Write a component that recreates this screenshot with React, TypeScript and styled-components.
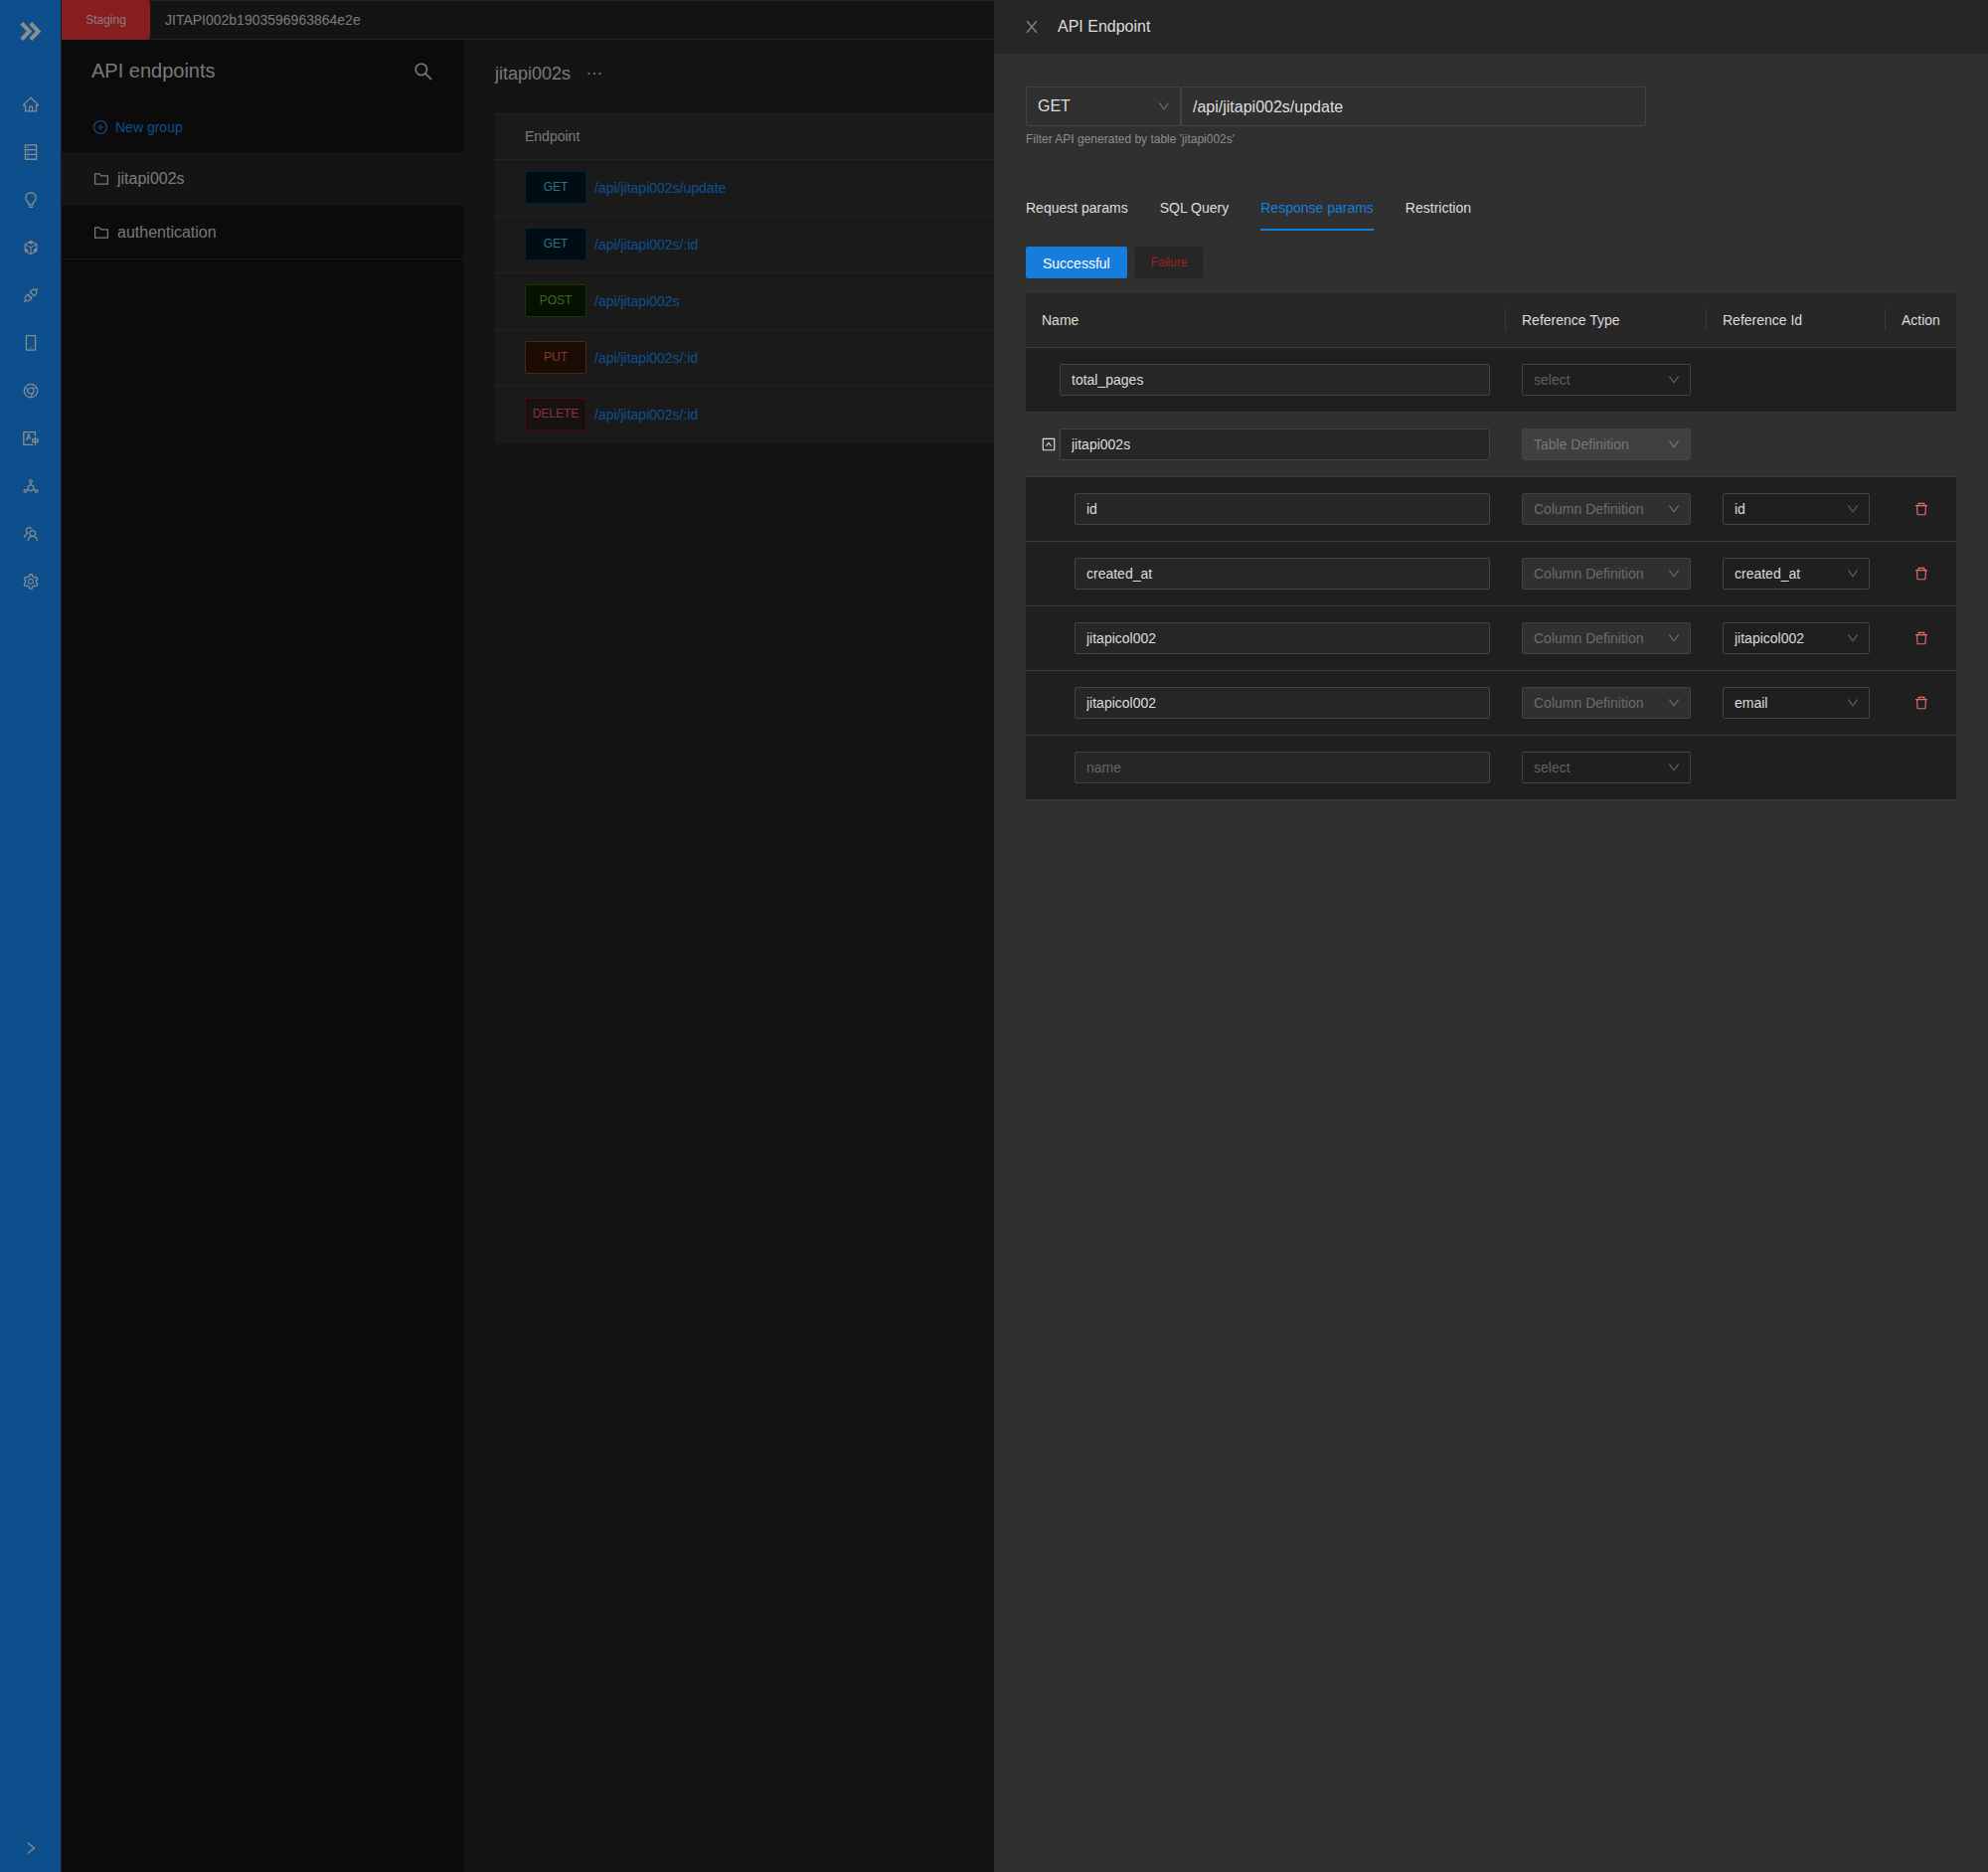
import React, { useState } from 'react';
import styled, { createGlobalStyle, css } from 'styled-components';
import {
  AiOutlineHome,
  AiOutlineDatabase,
  AiOutlineBulb,
  AiOutlineCodeSandbox,
  AiOutlineApi,
  AiOutlineMobile,
  AiOutlineChrome,
  AiOutlineTranslation,
  AiOutlineDeploymentUnit,
  AiOutlineTeam,
  AiOutlineSetting,
  AiOutlineRight,
  AiOutlineDown,
  AiOutlineUpSquare,
  AiOutlineDelete,
  AiOutlineEllipsis,
  AiOutlineFolder,
  AiOutlinePlusCircle,
  AiOutlineSearch,
} from 'react-icons/ai';

const text = 'rgba(255, 255, 255, 0.85)';
const muted = 'rgba(255, 255, 255, 0.45)';
const faint = 'rgba(255, 255, 255, 0.3)';
const line = '#434343';
const blue = '#177ddc';

const GlobalStyle = createGlobalStyle`
  *, *::before, *::after { box-sizing: border-box; }
  body {
    margin: 0;
    background: #262626;
    color: ${text};
    font-family: "Liberation Sans", Arial, sans-serif;
    font-size: 14px;
    line-height: 22px;
  }
  button, input, select { font: inherit; color: inherit; margin: 0; }
  h1, h2, p { margin: 0; font-weight: 400; }
  a { text-decoration: none; color: inherit; }
  svg { display: block; flex: none; }
`;

const bareButton = css`
  display: inline-flex;
  align-items: center;
  padding: 0;
  border: 0;
  background: none;
  cursor: pointer;
`;

const Page = styled.div`
  display: flex;
  min-height: 100vh;
`;

const Rail = styled.nav`
  display: flex;
  flex-direction: column;
  align-items: center;
  flex: none;
  width: 62px;
  background: #1890ff;
  border-right: 1px solid #303030;
  color: #fff;
`;

const Logo = styled.a`
  display: flex;
  padding: 22px 0 40px;
`;

const RailLink = styled.a`
  display: flex;
  align-items: center;
  height: 48px;
`;

const RailToggle = styled.button`
  ${bareButton}
  height: 48px;
  margin-top: auto;
`;

const Workspace = styled.div`
  display: flex;
  flex-direction: column;
  flex: 1;
  min-width: 0;
`;

const TopBar = styled.header`
  display: flex;
  align-items: stretch;
  height: 40px;
  background:
    linear-gradient(${line}, ${line}) top / 100% 1px no-repeat,
    linear-gradient(${line}, ${line}) bottom / 100% 1px no-repeat,
    #262626;
`;

const Stage = styled.span`
  display: flex;
  align-items: center;
  justify-content: center;
  width: 89px;
  border-radius: 0 4px 4px 0;
  background: #f5383b;
  font-size: 12px;
`;

const Project = styled.span`
  padding: 9px 15px;
`;

const Columns = styled.div`
  display: flex;
  flex: 1;
`;

const Groups = styled.section`
  flex: none;
  width: 404px;
  background: #141414;
`;

const GroupsHead = styled.div`
  display: flex;
  align-items: center;
  justify-content: space-between;
  padding: 16px 29px 16px 30px;
  h1 { padding-bottom: 2px; font-size: 20px; line-height: 30px; }
`;

const IconButton = styled.button<{ $color?: string }>`
  ${bareButton}
  color: ${(p) => p.$color || 'inherit'};
`;

const NewGroup = styled.button`
  ${bareButton}
  gap: 7px;
  margin: 13px 31px 14px;
  color: #1890ff;
`;

const GroupList = styled.ul`
  margin: 0;
  padding: 0;
  list-style: none;
`;

const GroupLink = styled.a<{ $active?: boolean }>`
  display: flex;
  align-items: center;
  gap: 7px;
  height: 54px;
  padding: 0 31px;
  border-bottom: 1px solid ${(p) => (p.$active ? '#262626' : '#303030')};
  background: ${(p) => (p.$active ? '#262626' : 'transparent')};
  font-size: 16px;
`;

const Content = styled.main`
  flex: 1;
  min-width: 0;
  padding: 20px 32px;
`;

const ContentHead = styled.div`
  display: flex;
  align-items: center;
  gap: 14px;
  padding-bottom: 26px;
  h2 { font-size: 18px; line-height: 28px; }
`;

const EndpointTable = styled.table`
  width: 100%;
  border-collapse: separate;
  border-spacing: 0;
  background: #303030;
  th {
    height: 47px;
    padding: 0 30px 2px;
    border: solid ${line};
    border-width: 1px 0;
    text-align: left;
    font-weight: 400;
  }
  td { padding: 11px 30px 12px; border-bottom: 1px solid ${line}; }
  tr:last-child td { border-bottom-color: #303030; }
`;

const EndpointLine = styled.div`
  display: flex;
  align-items: center;
  gap: 8px;
  a { color: #1890ff; }
`;

type Method = 'GET' | 'POST' | 'PUT' | 'DELETE';

const methodColors: Record<Method, { bg: string; edge: string; ink: string }> = {
  GET: { bg: '#001a26', edge: '#003f60', ink: '#66c8ee' },
  POST: { bg: '#0b2005', edge: '#2a6410', ink: '#69be3a' },
  PUT: { bg: '#32190a', edge: '#8a4a1c', ink: '#ee6e42' },
  DELETE: { bg: '#2a1f1f', edge: '#82181e', ink: '#ee666a' },
};

const Tag = styled.span<{ $method: Method }>`
  display: flex;
  justify-content: center;
  width: 62px;
  height: 33px;
  border: 1px solid ${(p) => methodColors[p.$method].edge};
  border-radius: 2px;
  background: ${(p) => methodColors[p.$method].bg};
  color: ${(p) => methodColors[p.$method].ink};
  font-size: 12px;
  line-height: 30px;
`;

const Mask = styled.div`
  position: fixed;
  inset: 0;
  background: rgba(0, 0, 0, 0.45);
`;

const Drawer = styled.aside`
  position: fixed;
  top: 0;
  right: 0;
  bottom: 0;
  width: 50%;
  overflow: auto;
  background: #303030;
`;

const DrawerHead = styled.header`
  display: flex;
  align-items: center;
  gap: 17px;
  height: 54px;
  padding: 0 29px;
  background: #262626;
  h2 { font-size: 16px; }
`;

const DrawerBody = styled.div`
  padding: 33px 32px;
`;

const PathRow = styled.div`
  display: flex;
  width: 66.667%;
  height: 40px;
  font-size: 16px;
`;

const field = css`
  width: 100%;
  height: 100%;
  padding: 0 11px;
  border: 1px solid ${line};
  border-radius: 2px;
  outline: none;
  &::placeholder { color: ${faint}; opacity: 1; }
  &:focus { border-color: ${blue}; }
`;

const PathInput = styled.input`
  ${field}
  flex: 1;
  padding-top: 2px;
  background: transparent;
`;

const NameInput = styled.input`
  ${field}
  height: 32px;
  min-width: 0;
  background: #262626;
`;

const SelectBox = styled.span<{ $width: string; $height: string }>`
  position: relative;
  display: block;
  flex: none;
  width: ${(p) => p.$width};
  height: ${(p) => p.$height};
  svg {
    position: absolute;
    top: 50%;
    right: 10px;
    margin-top: -7px;
    color: ${faint};
    pointer-events: none;
  }
`;

const NativeSelect = styled.select<{ $hint?: boolean }>`
  ${field}
  display: block;
  padding-right: 24px;
  appearance: none;
  background: transparent;
  color: ${(p) => (p.$hint ? faint : text)};
  &:disabled {
    background: rgba(255, 255, 255, 0.08);
    color: ${faint};
    opacity: 1;
  }
  option { background: #1f1f1f; }
`;

const Help = styled.p`
  padding-top: 2px;
  color: ${muted};
  font-size: 12px;
`;

const Tabs = styled.div`
  display: flex;
  gap: 32px;
  margin-top: 35px;
`;

const Tab = styled.button<{ $active: boolean }>`
  ${bareButton}
  padding: 12px 0 10px;
  border-bottom: 2px solid ${(p) => (p.$active ? blue : 'transparent')};
  color: ${(p) => (p.$active ? blue : text)};
`;

const Outcomes = styled.div`
  display: flex;
  gap: 8px;
  padding: 16px 0 15px;
`;

const Outcome = styled.button<{ $primary?: boolean }>`
  display: flex;
  align-items: center;
  justify-content: center;
  height: 32px;
  padding: ${(p) => (p.$primary ? '2px 17px 0' : '0 16px')};
  border: 0;
  border-radius: 2px;
  background: ${(p) => (p.$primary ? blue : '#262626')};
  color: ${(p) => (p.$primary ? '#fff' : '#a61d24')};
  font-size: ${(p) => (p.$primary ? '14px' : '12px')};
  cursor: pointer;
`;

const ParamTable = styled.table`
  width: 100%;
  table-layout: fixed;
  border-collapse: separate;
  border-spacing: 0;
  th, td {
    padding: 16px;
    border-bottom: 1px solid #3a3a3a;
    text-align: left;
    font-weight: 400;
  }
  th {
    padding: 16px 0;
    background: #272727;
  }
`;

const HeadLabel = styled.span<{ $last?: boolean }>`
  display: block;
  padding-left: 16px;
  border-right: ${(p) => (p.$last ? '0' : '1px solid #3a3a3a')};
`;

const ParamRow = styled.tr<{ $open?: boolean }>`
  background: ${(p) => (p.$open ? '#303030' : '#1f1f1f')};
`;

const NameCell = styled.div<{ $depth: number }>`
  display: flex;
  align-items: center;
  gap: 4px;
  padding-left: ${(p) => (p.$depth === 1 ? '33px' : p.$depth === 0 ? '18px' : '0')};
`;

const Expander = styled.button`
  ${bareButton}
  justify-content: center;
  flex: none;
  width: 14px;
`;

const Center = styled.div`
  display: flex;
  justify-content: center;
`;

function Chevrons() {
  return (
    <svg width="22" height="19" viewBox="0 0 22 19" fill="none" stroke="currentColor" strokeWidth="4">
      <path d="M1.8 1.4L9.6 9.5L1.8 17.6M10.8 1.4L18.6 9.5L10.8 17.6" />
    </svg>
  );
}

function Cross() {
  return (
    <svg width="18" height="18" viewBox="0 0 1024 1024" fill="currentColor">
      <path d="M563.8 512l262.5-312.9c4.4-5.2.7-13.1-6.1-13.1h-79.8c-4.7 0-9.2 2.1-12.3 5.7L511.6 449.8 295.1 191.7c-3-3.6-7.5-5.7-12.3-5.7H203c-6.8 0-10.5 7.9-6.1 13.1L459.4 512 196.9 824.9A7.95 7.95 0 0 0 203 838h79.8c4.7 0 9.2-2.1 12.3-5.7l216.5-258.1 216.5 258.1c3 3.6 7.5 5.7 12.3 5.7h79.8c6.8 0 10.5-7.9 6.1-13.1L563.8 512z" />
    </svg>
  );
}

function Select(props: {
  label: string;
  value: string;
  options?: string[];
  hint?: boolean;
  disabled?: boolean;
  width?: string;
  height?: string;
}) {
  const { label, value, options = [], hint, disabled, width = '100%', height = '32px' } = props;
  return (
    <SelectBox $width={width} $height={height}>
      <NativeSelect aria-label={label} defaultValue={value} disabled={disabled} $hint={hint}>
        {[value, ...options.filter((o) => o !== value)].map((o) => (
          <option key={o}>{o}</option>
        ))}
      </NativeSelect>
      <AiOutlineDown size={14} />
    </SelectBox>
  );
}

const railItems = [
  { name: 'Home', Icon: AiOutlineHome },
  { name: 'Database', Icon: AiOutlineDatabase },
  { name: 'Logic', Icon: AiOutlineBulb },
  { name: 'Packages', Icon: AiOutlineCodeSandbox },
  { name: 'API', Icon: AiOutlineApi },
  { name: 'Mobile', Icon: AiOutlineMobile },
  { name: 'Web', Icon: AiOutlineChrome },
  { name: 'Translations', Icon: AiOutlineTranslation },
  { name: 'Deployment', Icon: AiOutlineDeploymentUnit },
  { name: 'Users', Icon: AiOutlineTeam },
  { name: 'Settings', Icon: AiOutlineSetting },
];

const groups = ['jitapi002s', 'authentication'];

const endpoints: { method: Method; path: string }[] = [
  { method: 'GET', path: '/api/jitapi002s/update' },
  { method: 'GET', path: '/api/jitapi002s/:id' },
  { method: 'POST', path: '/api/jitapi002s' },
  { method: 'PUT', path: '/api/jitapi002s/:id' },
  { method: 'DELETE', path: '/api/jitapi002s/:id' },
];

const tabs = ['Request params', 'SQL Query', 'Response params', 'Restriction'];

const columnNames = ['id', 'created_at', 'jitapicol002', 'email'];

type Param = { name: string; type: string; ref?: string; depth: number; open?: boolean };

const params: Param[] = [
  { name: 'total_pages', type: 'select', depth: 0 },
  { name: 'jitapi002s', type: 'Table Definition', depth: -1, open: true },
  { name: 'id', type: 'Column Definition', ref: 'id', depth: 1 },
  { name: 'created_at', type: 'Column Definition', ref: 'created_at', depth: 1 },
  { name: 'jitapicol002', type: 'Column Definition', ref: 'jitapicol002', depth: 1 },
  { name: 'jitapicol002', type: 'Column Definition', ref: 'email', depth: 1 },
  { name: '', type: 'select', depth: 1 },
];

export default function App() {
  const [tab, setTab] = useState('Response params');

  return (
    <>
      <GlobalStyle />
      <Page>
        <Rail aria-label="Main">
          <Logo href="#" aria-label="Dashboard">
            <Chevrons />
          </Logo>
          {railItems.map(({ name, Icon }) => (
            <RailLink key={name} href="#" aria-label={name}>
              <Icon size={18} />
            </RailLink>
          ))}
          <RailToggle aria-label="Expand menu">
            <AiOutlineRight size={16} />
          </RailToggle>
        </Rail>
        <Workspace>
          <TopBar>
            <Stage>Staging</Stage>
            <Project>JITAPI002b1903596963864e2e</Project>
          </TopBar>
          <Columns>
            <Groups>
              <GroupsHead>
                <h1>API endpoints</h1>
                <IconButton aria-label="Search">
                  <AiOutlineSearch size={22} />
                </IconButton>
              </GroupsHead>
              <NewGroup>
                <AiOutlinePlusCircle size={16} />
                New group
              </NewGroup>
              <GroupList>
                {groups.map((g, i) => (
                  <li key={g}>
                    <GroupLink href="#" $active={i === 0}>
                      <AiOutlineFolder size={18} />
                      {g}
                    </GroupLink>
                  </li>
                ))}
              </GroupList>
            </Groups>
            <Content>
              <ContentHead>
                <h2>jitapi002s</h2>
                <IconButton aria-label="More">
                  <AiOutlineEllipsis size={20} />
                </IconButton>
              </ContentHead>
              <EndpointTable>
                <thead>
                  <tr>
                    <th>Endpoint</th>
                  </tr>
                </thead>
                <tbody>
                  {endpoints.map((e) => (
                    <tr key={e.method + e.path}>
                      <td>
                        <EndpointLine>
                          <Tag $method={e.method}>{e.method}</Tag>
                          <a href="#">{e.path}</a>
                        </EndpointLine>
                      </td>
                    </tr>
                  ))}
                </tbody>
              </EndpointTable>
            </Content>
          </Columns>
        </Workspace>
      </Page>
      <Mask />
      <Drawer aria-label="API Endpoint">
        <DrawerHead>
          <IconButton aria-label="Close" $color={muted}>
            <Cross />
          </IconButton>
          <h2>API Endpoint</h2>
        </DrawerHead>
        <DrawerBody>
          <PathRow>
            <Select
              label="Method"
              value="GET"
              options={['POST', 'PUT', 'DELETE']}
              width="25%"
              height="40px"
            />
            <PathInput aria-label="Path" defaultValue="/api/jitapi002s/update" />
          </PathRow>
          <Help>Filter API generated by table 'jitapi002s'</Help>
          <Tabs role="tablist">
            {tabs.map((t) => (
              <Tab
                key={t}
                role="tab"
                aria-selected={t === tab}
                $active={t === tab}
                onClick={() => setTab(t)}
              >
                {t}
              </Tab>
            ))}
          </Tabs>
          <Outcomes>
            <Outcome $primary>Successful</Outcome>
            <Outcome>Failure</Outcome>
          </Outcomes>
          <ParamTable>
            <colgroup>
              <col />
              <col width="202" />
              <col width="180" />
              <col width="71" />
            </colgroup>
            <thead>
              <tr>
                <th><HeadLabel>Name</HeadLabel></th>
                <th><HeadLabel>Reference Type</HeadLabel></th>
                <th><HeadLabel>Reference Id</HeadLabel></th>
                <th><HeadLabel $last>Action</HeadLabel></th>
              </tr>
            </thead>
            <tbody>
              {params.map((p, i) => (
                <ParamRow key={i} $open={p.open}>
                  <td>
                    <NameCell $depth={p.depth}>
                      {p.open && (
                        <Expander aria-label="Collapse" aria-expanded>
                          <AiOutlineUpSquare size={16} />
                        </Expander>
                      )}
                      <NameInput aria-label="Name" placeholder="name" defaultValue={p.name} />
                    </NameCell>
                  </td>
                  <td>
                    <Select
                      label="Reference type"
                      value={p.type}
                      hint={p.type === 'select'}
                      disabled={p.type !== 'select'}
                    />
                  </td>
                  <td>{p.ref && <Select label="Reference id" value={p.ref} options={columnNames} />}</td>
                  <td>
                    {p.ref && (
                      <Center>
                        <IconButton aria-label="Delete" $color="#e86e6b">
                          <AiOutlineDelete size={16} />
                        </IconButton>
                      </Center>
                    )}
                  </td>
                </ParamRow>
              ))}
            </tbody>
          </ParamTable>
        </DrawerBody>
      </Drawer>
    </>
  );
}
